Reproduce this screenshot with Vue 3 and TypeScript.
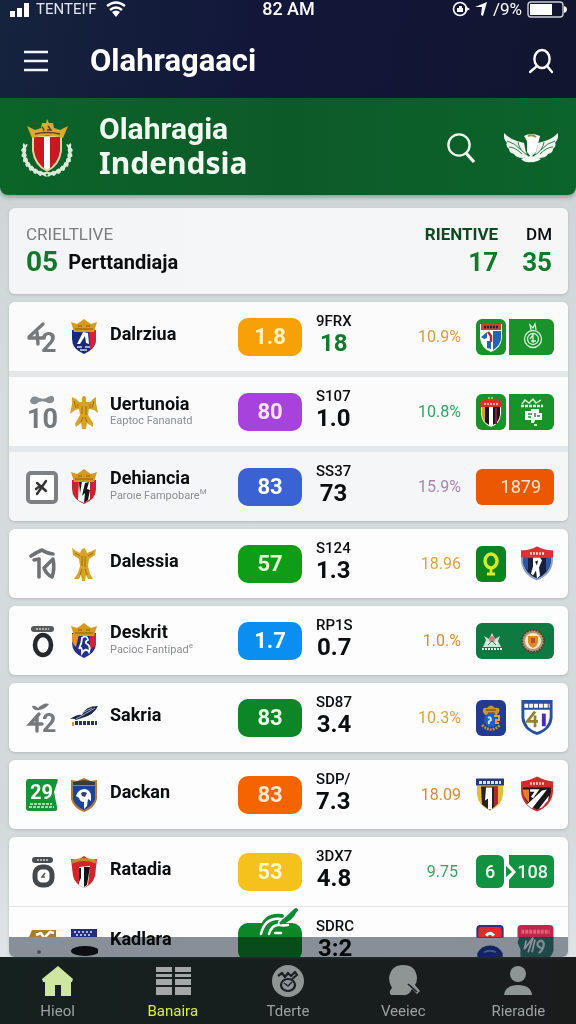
<script setup lang="ts">
interface Digits {
  text: string
  x: number
  y: number
  size: number
  fill: string
}
interface TailItem {
  kind: 'tile' | 'icon' | 'text' | 'wide'
  tone?: string
  icons?: string[]
  text?: string
}
interface Row {
  rank: string
  rankLabel: string
  digits?: Digits
  crest: string
  name: string
  sub?: string
  mark?: string
  score: string
  tone: string
  code: string
  value: string
  valueTone?: string
  pct: string
  pctTone: string
  tail: TailItem[]
}
interface Group {
  id: string
  kind: string
  rows: Row[]
}

const groups: Group[] = [
  {
    id: 'top',
    kind: 'banded',
    rows: [
      {
        rank: 'rank-42', rankLabel: '42', digits: { text: '2', x: 15, y: 33, size: 27, fill: '#77797b' },
        crest: 'crest-navy', name: 'Dalrziua', score: '1.8', tone: 'amber',
        code: '9FRX', value: '18', valueTone: 'green', pct: '10.9%', pctTone: 'p-amber',
        tail: [{ kind: 'tile', tone: 'leaf', icons: ['shield-blue'] }, { kind: 'tile', tone: 'leaf flag', icons: ['medal'] }],
      },
      {
        rank: 'rank-10', rankLabel: '10', digits: { text: '10', x: 1, y: 34, size: 27, fill: '#77797b' },
        crest: 'eagle', name: 'Uertunoia', sub: 'Eaptoc Fananatd', score: '80', tone: 'purple',
        code: 'S107', value: '1.0', pct: '10.8%', pctTone: 'p-green',
        tail: [{ kind: 'tile', tone: 'leaf', icons: ['shield-stripe'] }, { kind: 'tile', tone: 'leaf flag', icons: ['stamp'] }],
      },
      {
        rank: 'rank-x', rankLabel: 'X', crest: 'crest-red', name: 'Dehiancia', sub: 'Paroıe Fampobare', mark: 'M', score: '83', tone: 'blue',
        code: 'SS37', value: '73', pct: '15.9%', pctTone: 'p-mauve',
        tail: [{ kind: 'wide', tone: 'rust', text: '1879' }],
      },
    ],
  },
  {
    id: 'dalessia',
    kind: 'single',
    rows: [
      {
        rank: 'rank-70', rankLabel: '70', crest: 'eagle-slim', name: 'Dalessia', score: '57', tone: 'lime',
        code: 'S124', value: '1.3', pct: '18.96', pctTone: 'p-gold',
        tail: [{ kind: 'tile', tone: 'forest', icons: ['trophy'] }, { kind: 'icon', icons: ['shield-pris'] }],
      },
    ],
  },
  {
    id: 'deskrit',
    kind: 'single',
    rows: [
      {
        rank: 'rank-0', rankLabel: '0', crest: 'crest-royal', name: 'Deskrit', sub: 'Pacioc Fantipad', mark: 'e', score: '1.7', tone: 'sky',
        code: 'RP1S', value: '0.7', pct: '1.0.%', pctTone: 'p-orange',
        tail: [{ kind: 'wide', tone: 'pine', icons: ['lotus', 'roundel'] }],
      },
    ],
  },
  {
    id: 'sakria',
    kind: 'single',
    rows: [
      {
        rank: 'rank-42b', rankLabel: '42', digits: { text: '2', x: 16, y: 32, size: 25, fill: '#77797b' },
        crest: 'quill', name: 'Sakria', score: '83', tone: 'emerald',
        code: 'SD87', value: '3.4', pct: '10.3%', pctTone: 'p-gold',
        tail: [{ kind: 'tile', tone: 'royal', icons: ['lion'] }, { kind: 'icon', icons: ['shield-41'] }],
      },
    ],
  },
  {
    id: 'dackan',
    kind: 'single',
    rows: [
      {
        rank: 'rank-29', rankLabel: '29', digits: { text: '29', x: 4, y: 22, size: 20, fill: '#fff' },
        crest: 'crest-wolf', name: 'Dackan', score: '83', tone: 'orange',
        code: 'SDP/', value: '7.3', pct: '18.09', pctTone: 'p-orange',
        tail: [{ kind: 'icon', icons: ['shield-gold'] }, { kind: 'icon', icons: ['shield-slash'] }],
      },
    ],
  },
  {
    id: 'last',
    kind: 'lined',
    rows: [
      {
        rank: 'rank-0b', rankLabel: '0', crest: 'crest-stripe', name: 'Ratadia', score: '53', tone: 'yellow',
        code: '3DX7', value: '4.8', pct: '9.75', pctTone: 'p-green inset',
        tail: [{ kind: 'text', tone: 'mint small', text: '6' }, { kind: 'text', tone: 'arrow', icons: ['notch'], text: '108' }],
      },
      {
        rank: 'rank-gold', rankLabel: '', crest: 'crest-cut', name: 'Kadlara', score: '', tone: 'emerald swirl',
        code: 'SDRC', value: '3:2', pct: '', pctTone: 'p-green',
        tail: [{ kind: 'icon', icons: ['chip-red'] }, { kind: 'icon', tone: 'chip', icons: ['chip-teal'] }],
      },
    ],
  },
]

const tabs = [
  { icon: 'tab-home', label: 'Hieol', state: 'home' },
  { icon: 'tab-grid', label: 'Banaira', state: 'active' },
  { icon: 'tab-ball', label: 'Tderte', state: '' },
  { icon: 'tab-chat', label: 'Veeiec', state: '' },
  { icon: 'tab-user', label: 'Rieradie', state: '' },
]

const leaves = Array.from({ length: 8 }, (_, i) => {
  const deg = 100 + i * 13
  const rad = (deg * Math.PI) / 180
  const x = 27 + 23 * Math.cos(rad)
  const y = 33 + 22 * Math.sin(rad)
  return { outer: `translate(${x.toFixed(1)} ${y.toFixed(1)}) rotate(${deg + 68})`, inner: `translate(${x.toFixed(1)} ${y.toFixed(1)}) rotate(${deg + 118})` }
})
</script>

<template>
  <div class="page">
    <svg class="defs" aria-hidden="true">
      <symbol id="rank-42" viewBox="0 0 32 36">
        <path d="M3 18 L17 5 M11 13 L12 25 M3 19 H18" fill="none" stroke="#77797b" stroke-width="3.4" stroke-linecap="round" />
      </symbol>
      <symbol id="rank-10" viewBox="0 0 32 36">
        <path d="M4 7 Q6 0 13 4 Q19 6 22 3 Q29 0 28 7 Q25 11 20 8 Q14 6 10 10 Q5 11 4 7Z" fill="#8a8c8e" />
      </symbol>
      <symbol id="rank-x" viewBox="0 0 32 36">
        <rect x="2" y="4" width="28" height="29" rx="3" fill="#fff" stroke="#7e8183" stroke-width="4" />
        <path d="M20 12 L11 25 M11 14 L20 22 M10 20 L14 17" fill="none" stroke="#333" stroke-width="2.4" stroke-linecap="round" />
      </symbol>
      <symbol id="rank-70" viewBox="0 0 32 36">
        <g fill="none" stroke="#6f7274" stroke-width="3.6" stroke-linecap="round" stroke-linejoin="round">
          <path d="M5 10 Q11 6 16 4 Q20 7 27 8 M8 14 L13 13 V31" />
          <path d="M27 13 L18 22 Q20 28 26 31 Q29 23 27 13Z" />
        </g>
      </symbol>
      <symbol id="rank-0" viewBox="0 0 32 36">
        <rect x="5" y="3" width="23" height="6" rx="3" fill="#585b5d" />
        <path d="M10 6 H23" stroke="#c8cacb" stroke-width="1.5" stroke-dasharray="2 1" />
        <ellipse cx="17" cy="22" rx="8" ry="10" fill="none" stroke="#25292b" stroke-width="4.6" />
      </symbol>
      <symbol id="rank-42b" viewBox="0 0 32 36">
        <path d="M6 6 Q9 5 12 8 Q18 2 23 4 Q20 9 13 10 Q7 11 6 6Z" fill="#77797b" />
        <path d="M13 14 L4 24 H16 M11 16 V31" fill="none" stroke="#77797b" stroke-width="3.4" stroke-linecap="round" />
      </symbol>
      <symbol id="rank-29" viewBox="0 0 32 36">
        <path d="M3 2 H30 Q33 2 31 6 L28 15 L31 30 Q32 34 29 34 H3 Q0 34 0 31 V5 Q0 2 3 2Z" fill="#149433" />
        <path d="M4 27 H26 M3 30 H28" stroke="#d5f1da" stroke-width="1.6" stroke-dasharray="3 1" />
      </symbol>
      <symbol id="rank-0b" viewBox="0 0 32 36">
        <rect x="6" y="3" width="21" height="6" rx="3" fill="#4a4d4f" />
        <path d="M11 6 H22" stroke="#d2d4d5" stroke-width="1.5" stroke-dasharray="2 1" />
        <rect x="9" y="13" width="17" height="18" rx="7" fill="none" stroke="#45484a" stroke-width="5" />
        <path d="M19 19 L16 23 H19" fill="none" stroke="#555" stroke-width="1.5" />
      </symbol>
      <symbol id="rank-gold" viewBox="0 0 32 36">
        <path d="M6 6 H30 V13 H3Z" fill="#a97a30" />
        <path d="M10 11 L15 9 L18 14 L24 8 L28 9" fill="none" stroke="#fff" stroke-width="2.5" />
        <circle cx="13" cy="28" r="2" fill="#8b93a0" />
      </symbol>

      <symbol id="crown" viewBox="0 0 28 13">
        <path d="M1 3 L7 5 L10 3 L14 0 L18 3 L21 5 L27 3 L24 13 H4Z" fill="#d79a1c" />
        <path d="M5 10 H23 M8 7 H12 M16 7 H20" stroke="#8b5a0c" stroke-width="1.2" />
      </symbol>
      <symbol id="crest-navy" viewBox="0 0 28 36">
        <path d="M2 11 H26 V20 Q26 30 14 35 Q2 30 2 20Z" fill="#1b2a78" />
        <path d="M19 11 H26 V20 Q26 27 20 31Z" fill="#d0243a" />
        <path d="M13 13 L18 14 L19 25 L16 24 L15 17 L10 25 L7 25Z" fill="#fff" />
        <path d="M7 28 H12 M15 28 H20 M10 31 H17" stroke="#cfd7f0" stroke-width="1.6" />
        <use href="#crown" width="28" height="13" />
      </symbol>
      <symbol id="crest-royal" viewBox="0 0 28 36">
        <path d="M2 10 H26 V20 Q26 30 14 35 Q2 30 2 20Z" fill="#20308c" />
        <path d="M2 11 H9 L6 24 Q2 20 2 18Z" fill="#e8912a" />
        <path d="M20 11 H26 V22 L20 27Z" fill="#d0243a" />
        <path d="M12 15 Q17 11 18 17 Q14 19 17 21 Q21 23 19 29 Q16 24 12 30 Q12 22 9 26 Q12 20 12 15Z" fill="none" stroke="#fff" stroke-width="1.8" />
        <use href="#crown" width="28" height="13" />
      </symbol>
      <symbol id="crest-red" viewBox="0 0 28 36">
        <path d="M2 11 H26 V20 Q26 30 14 35 Q2 30 2 20Z" fill="#d2202c" />
        <path d="M9 12 H20 V30 L14 34 L8 31Z" fill="#fff" />
        <path d="M15 14 L19 13 L17 20 L20 21 L18 31 L14 34 L15 24 L12 27Z" fill="#161616" />
        <path d="M9 13 L12 12 L10 25Z" fill="#161616" />
        <use href="#crown" width="28" height="13" />
      </symbol>
      <symbol id="crest-wolf" viewBox="0 0 28 36">
        <path d="M1 3 L7 4 L14 1 L21 4 L27 3 V22 Q25 31 14 35 Q3 31 1 22Z" fill="#b57a34" />
        <path d="M3 9 H25 V22 Q23 29 14 33 Q5 29 3 22Z" fill="#1a439c" />
        <path d="M3 5 L14 3 L25 5 V8 H3Z" fill="#3c3a3a" />
        <path d="M6 19 Q8 12 15 12 Q20 13 21 18 L21 24 L18 22 L17 29 L14 32 L14 25 Q10 25 9 21Z" fill="#fff" />
        <path d="M11 16 Q14 14 17 16 L15 20 L12 19Z" fill="#2b3f73" />
      </symbol>
      <symbol id="crest-stripe" viewBox="0 0 28 36">
        <path d="M1 5 L8 6 L14 2 L20 6 L27 5 L25 22 Q23 30 14 34 Q5 30 3 22Z" fill="#d3242a" />
        <path d="M2 8 Q14 3 26 8" fill="none" stroke="#c8892c" stroke-width="3" />
        <path d="M9 13 L20 12 L18 31 L14 34 L9 31Z" fill="#fff" />
        <path d="M14 13 H20 L17 31 L14 33Z M9 14 H11 V24 L9 28Z" fill="#141414" />
      </symbol>
      <symbol id="crest-cut" viewBox="0 0 28 36">
        <path d="M1 5 H27 V13 H1Z" fill="#222e84" />
        <path d="M4 8 H24 M6 11 H22" stroke="#dfe4ff" stroke-width="1.4" stroke-dasharray="2 2" />
        <ellipse cx="15" cy="27" rx="14" ry="5" fill="#15181b" />
      </symbol>
      <symbol id="eagle" viewBox="0 0 28 36">
        <path d="M2 3 L6 5 L9 8 L12 8 Q11 4 13 2 Q17 2 16 5 L16 8 L20 8 L23 5 L26 3 L26 9 L28 19 L24 16 L19 15 L18 21 L23 29 L23 33 L17 29 L16 35 H12 L11 29 L6 33 L5 30 L10 21 L9 15 L5 16 L0 20 L2 10Z" fill="#d9a326" />
        <path d="M4 7 L6 14 M24 7 L22 14 M12 12 V20 M16 12 V21 M13 23 L11 28 M15 23 L17 28 M8 10 V14 M20 10 V14" fill="none" stroke="#9a6b12" stroke-width="1" />
      </symbol>
      <symbol id="eagle-slim" viewBox="0 0 28 36">
        <path d="M2 2 L6 5 L10 7 L12 3 L15 2 L17 7 L22 5 L26 3 L25 9 L19 13 L18 20 L20 28 L23 33 L18 33 L16 29 L15 35 L12 35 L11 29 L9 33 L4 33 L8 27 L10 20 L9 13 L3 9Z" fill="#d9a326" />
        <path d="M5 7 L10 10 M23 7 L18 10 M12 10 V20 M15 10 V21 M12 23 L10 29 M15 23 L17 29" fill="none" stroke="#9a6b12" stroke-width="1" />
      </symbol>
      <symbol id="quill" viewBox="0 0 28 36">
        <path d="M0 19 Q8 14 12 15 Q15 6 28 6 Q24 15 12 18 L6 20 Q4 18 0 19Z" fill="#1c2648" />
        <path d="M6 19 Q15 14 25 8 M12 13 L22 8" stroke="#b8c0d8" stroke-width="0.9" fill="none" />
        <path d="M5 23 H27" stroke="#25345f" stroke-width="4" stroke-dasharray="3 1" />
        <path d="M3 22 V26" stroke="#e09027" stroke-width="2" />
      </symbol>

      <symbol id="shield-blue" viewBox="0 0 24 32">
        <path d="M1 3 H23 V17 Q22 27 12 31 Q2 27 1 17Z" fill="#fff" />
        <path d="M2 3 H22 V9 H2Z" fill="#cf4326" />
        <path d="M5 6 H19" stroke="#1b2350" stroke-width="2.4" stroke-dasharray="2 1" />
        <path d="M14 10 H22 V18 Q21 25 14 29Z" fill="#2265b5" />
        <path d="M2 16 L8 11 V17 L5 18Z M8 20 H12 V28 L8 27Z" fill="#2265b5" />
        <path d="M9 11 L12 15 V21" fill="none" stroke="#b6292c" stroke-width="2.4" />
      </symbol>
      <symbol id="shield-stripe" viewBox="0 0 24 32">
        <path d="M2 5 H22 V18 Q21 28 12 31 Q3 28 2 18Z" fill="#fff" />
        <path d="M3 11 H8 V28 Q3 24 3 18Z" fill="#d6a02c" />
        <path d="M6 11 H10 V29 L6 26Z M14 11 H21 V19 Q20 26 14 29Z" fill="#1c1420" />
        <path d="M17 12 V28" stroke="#7d2436" stroke-width="2" />
        <path d="M1 5 L12 3 L23 5 L22 11 H2Z" fill="#d8342c" />
        <path d="M5 8 H19" stroke="#f5d8c8" stroke-width="1.6" stroke-dasharray="2 1" />
        <path d="M9 2 H15" stroke="#e3c558" stroke-width="1.4" stroke-dasharray="2 1" />
      </symbol>
      <symbol id="medal" viewBox="0 0 24 32">
        <g fill="none" stroke="#d7f3da" stroke-width="1.3">
          <circle cx="13" cy="18" r="8.5" />
          <circle cx="13" cy="18" r="5.5" />
          <path d="M11 9 L10 4 L13 7 L15 3 L16 9 M13 13 V22 M11 20 H16 M13 14 L10 18" />
        </g>
      </symbol>
      <symbol id="stamp" viewBox="0 0 24 32">
        <path d="M2 8 L5 4 L9 7 L13 3 L16 7 L21 4" fill="none" stroke="#dcf6df" stroke-width="1.4" />
        <path d="M1 10 H23" stroke="#dcf6df" stroke-width="2.4" stroke-dasharray="3 1" />
        <path d="M5 15 H11 V13 H19 V17 H22 V24 H15 L14 27 H11 V24 H5Z" fill="#fff" />
        <path d="M8 18 H12 M15 17 V21 M8 21 H11 M17 20 H20" stroke="#1d9130" stroke-width="1.5" />
        <path d="M14 29 H17" stroke="#fff" stroke-width="1.6" />
      </symbol>
      <symbol id="trophy" viewBox="0 0 24 32">
        <ellipse cx="12" cy="13" rx="6" ry="7" fill="none" stroke="#d8ec23" stroke-width="3.4" />
        <path d="M12 20 V26 M8 26 H16" stroke="#d8ec23" stroke-width="2.8" />
      </symbol>
      <symbol id="lotus" viewBox="0 0 24 32">
        <path d="M3 22 L6 15 L4 11 L9 14 L12 8 L15 14 L20 11 L18 16 L21 22Z" fill="#cfe6d6" />
        <circle cx="12" cy="14" r="3" fill="#c97f7f" />
        <path d="M7 18 H17 M2 24 H22" stroke="#e9f5ec" stroke-width="1.8" stroke-dasharray="2 1" />
        <path d="M8 20 L12 16 L16 20" stroke="#1c7a45" fill="none" />
      </symbol>
      <symbol id="roundel" viewBox="0 0 24 32">
        <circle cx="12" cy="16" r="11" fill="#a79a78" stroke="#5d3b2d" stroke-width="2" stroke-dasharray="2 1" />
        <circle cx="12" cy="16" r="8" fill="#f4ead0" />
        <path d="M7 11 H17 V16 Q17 21 12 23 Q7 21 7 16Z" fill="#dd8a1f" />
        <path d="M10 13 H14 V18 H10Z" fill="#c5462a" />
      </symbol>
      <symbol id="lion" viewBox="0 0 24 32">
        <path d="M4 10 Q3 5 8 6 Q12 1 16 6 Q22 5 20 10 L18 13 H6Z" fill="#d19330" />
        <path d="M7 8 H17 M9 11 H16" stroke="#5f4418" stroke-width="1.2" />
        <circle cx="12" cy="18" r="7" fill="#1c5fc6" />
        <path d="M9 16 Q12 14 12 18 Q9 19 10 22" fill="none" stroke="#bfe3ff" stroke-width="2" />
        <path d="M15 14 H20 V18 H17 V21 H20" fill="none" stroke="#dba33d" stroke-width="2" />
        <path d="M3 23 Q12 32 21 23" fill="none" stroke="#c98f3a" stroke-width="2.6" stroke-dasharray="2 1" />
      </symbol>
      <symbol id="shield-pris" viewBox="0 0 34 36">
        <path d="M1 5 Q10 5 17 1 Q24 5 33 5 V15 Q32 29 17 35 Q2 29 1 15Z" fill="#8aa1c9" />
        <path d="M3 12 H31 V16 Q29 28 17 33 Q5 28 3 16Z" fill="#18203f" />
        <path d="M26 12 H31 V16 Q30 22 26 27Z" fill="#2d55a5" />
        <path d="M3 12 H8 V25 Q3 21 3 16Z" fill="#2d55a5" />
        <path d="M13 12 H20 L22 15 L19 22 L20 30 L17 33 L16 25 L13 30 L11 28 L13 21Z" fill="#fff" />
        <path d="M15 16 L18 15 L17 20Z" fill="#18203f" />
        <path d="M1 5 Q10 5 17 1 Q24 5 33 5 V12 H1Z" fill="#df2f2e" />
        <path d="M10 8 H24" stroke="#ffdcd6" stroke-width="2.6" stroke-dasharray="2 1" />
      </symbol>
      <symbol id="shield-41" viewBox="0 0 34 38">
        <path d="M1 1 H33 V19 Q32 32 17 37 Q2 32 1 19Z" fill="#2750a2" />
        <path d="M4 11 H30 V19 Q29 30 17 34 Q5 30 4 19Z" fill="#fff" />
        <path d="M4 7 H30" stroke="#fff" stroke-width="4" stroke-dasharray="4 1" />
        <path d="M15 13 L7 23 H18 M15 17 V29" fill="none" stroke="#93822e" stroke-width="2.8" />
        <path d="M24 15 V28" stroke="#4a2bb3" stroke-width="4" />
      </symbol>
      <symbol id="shield-gold" viewBox="0 0 28 36">
        <path d="M1 9 H27 V18 Q26 29 14 34 Q2 29 1 18Z" fill="#e3bb3e" />
        <path d="M5 10 H22 V27 L14 34 L6 28Z" fill="#2b2021" />
        <path d="M18 10 H22 V27 L18 30Z" fill="#b02b27" />
        <path d="M10 11 H16 V33 H12 V22 L9 24Z" fill="#fff" />
        <path d="M0 2 H28 V9 H0Z" fill="#253a7c" />
        <path d="M3 6 H25" stroke="#dbe3f5" stroke-width="3" stroke-dasharray="3 1" />
      </symbol>
      <symbol id="shield-slash" viewBox="0 0 34 36">
        <path d="M1 5 Q10 4 17 0 Q24 4 33 5 V15 Q32 29 17 35 Q2 29 1 15Z" fill="#d02c2b" />
        <path d="M3 11 H31 V15 Q29 28 17 33 Q5 28 3 15Z" fill="#191719" />
        <path d="M3 13 H9 V26 Q3 20 3 15Z" fill="#e08325" />
        <path d="M7 28 L22 14 L27 13 L12 32Z M19 32 L29 19 L28 24 L22 31Z" fill="#fff" />
        <path d="M10 14 H17 L12 21" fill="none" stroke="#fff" stroke-width="2.6" />
        <path d="M10 7 H24" stroke="#ffc9bd" stroke-width="2.6" stroke-dasharray="2 1" />
      </symbol>
      <symbol id="notch" viewBox="0 0 48 33">
        <path d="M3 0 H42 Q48 0 48 6 V27 Q48 33 42 33 H3 V25 L10 17 L3 9Z" fill="#129140" />
        <path d="M0 11 L6 17 L0 22Z" fill="#129140" />
      </symbol>
      <symbol id="chip-red" viewBox="0 0 28 38">
        <path d="M4 2 H24 Q28 2 28 6 V15 H0 V6 Q0 2 4 2Z" fill="#3b2a8c" />
        <path d="M5 4 H23 Q26 4 26 8 V15 H2 V8 Q2 4 5 4Z" fill="#e22b2c" />
        <path d="M10 13 Q14 8 18 13" fill="none" stroke="#fff" stroke-width="3" />
        <path d="M1 38 V31 Q5 23 14 23 Q23 23 27 31 V38Z" fill="#24409c" />
        <path d="M8 30 Q14 27 20 30" fill="none" stroke="#7e9be0" stroke-width="2" />
      </symbol>
      <symbol id="chip-teal" viewBox="0 0 38 38">
        <path d="M3 14 H38 V28 Q36 36 30 36 H4 V27 L1 20Z" fill="#3a8378" />
        <path d="M5 2 H34 Q38 2 38 6 V15 H1 V6 Q1 2 5 2Z" fill="#c02649" />
        <path d="M5 9 H34" stroke="#e2607c" stroke-width="4" stroke-dasharray="3 1" />
        <path d="M10 18 L8 27 L17 15 L12 30 M19 17 L16 30" fill="none" stroke="#fff" stroke-width="1.8" />
        <path d="M27 26 Q20 25 22 20 Q26 16 28 21 Q28 27 23 31" fill="none" stroke="#e4f2f0" stroke-width="2.4" />
      </symbol>
      <symbol id="swirl" viewBox="0 0 64 40">
        <g fill="none" stroke-linecap="round">
          <path d="M24 22 Q27 7 44 9 M28 26 Q29 13 44 14 M46 14 L58 3" stroke="#128a35" stroke-width="4" />
          <path d="M23 27 Q27 10 43 12 Q37 20 50 18 M31 27 Q34 17 42 18 M37 26 H43" stroke="#fff" stroke-width="2.6" />
          <path d="M43 16 Q53 14 58 3" stroke="#128a35" stroke-width="3" />
        </g>
      </symbol>

      <symbol id="tab-home" viewBox="0 0 36 32">
        <path d="M18 1 L33 14 L32 17 H31 V31 H21 V20 H15 V31 H5 V17 H3 L2 14Z" fill="#cfe6a2" />
      </symbol>
      <symbol id="tab-grid" viewBox="0 0 36 32">
        <path d="M1 2 H17 V7 H1Z M20 2 H36 V7 H20Z M1 9 H17 V12 H1Z M20 9 H36 V12 H20Z M1 14 H17 V20 H1Z M20 14 H36 V20 H20Z M1 22 H17 V30 H1Z M20 22 H36 V30 H20Z" fill="#a3a7a8" />
      </symbol>
      <symbol id="tab-ball" viewBox="0 0 36 34">
        <circle cx="18" cy="17" r="16" fill="#8f9495" />
        <g fill="none" stroke="#191f20" stroke-width="2.2" stroke-linejoin="round">
          <path d="M8 12 L12 9 L15 13 L18 9 L21 12 L25 8 L27 11 L22 15" />
          <ellipse cx="18" cy="21" rx="7" ry="6" />
          <path d="M14 19 L18 22 L22 18" stroke-width="1.4" />
        </g>
      </symbol>
      <symbol id="tab-chat" viewBox="0 0 36 34">
        <path d="M18 1 Q31 1 32 14 Q32 18 30 21 L35 27 L32 30 L29 27 L27 25 Q24 32 18 31 H6 Q3 28 7 24 Q4 19 4 14 Q6 1 18 1Z" fill="#8f9495" />
        <path d="M23 20 L32 28" stroke="#191f20" stroke-width="1.6" />
      </symbol>
      <symbol id="tab-user" viewBox="0 0 36 32">
        <circle cx="18" cy="9" r="8" fill="#8f9495" />
        <path d="M4 30 Q5 20 18 20 Q31 20 32 30Z" fill="#8f9495" />
      </symbol>
    </svg>

    <header class="top">
      <div class="status">
        <div class="status-side">
          <svg width="21" height="16" viewBox="0 0 21 16" aria-hidden="true"><path d="M0 10 H5 V16 H0Z M7 7 H12 V16 H7Z M14 2 H19 V16 H14Z" fill="#fff" /></svg>
          <span class="carrier">TENTEI'F</span>
          <svg class="wifi" width="20" height="16" viewBox="0 0 20 16" aria-hidden="true">
            <path d="M1 5 Q10 -2 19 5 M4 9 Q10 4 16 9" fill="none" stroke="#fff" stroke-width="2.4" />
            <path d="M6 11 Q10 8 14 11 L10 16Z" fill="#fff" />
          </svg>
        </div>
        <span class="clock">82 AM</span>
        <div class="status-side end">
          <svg width="18" height="16" viewBox="0 0 18 16" aria-hidden="true">
            <circle cx="8" cy="8" r="6.5" fill="none" stroke="#fff" stroke-width="1.6" />
            <path d="M5 7 H7 V5 H10 V7 H11 V11 H5Z M13 5 L18 8 L13 11Z" fill="#fff" />
          </svg>
          <svg width="13" height="14" viewBox="0 0 13 14" aria-hidden="true"><path d="M0 5 L12 0 L8 14 L6 13 L7 5Z" fill="#fff" /></svg>
          <span class="battery-text">/9%</span>
          <svg width="40" height="17" viewBox="0 0 40 17" aria-hidden="true">
            <rect x="1" y="1" width="35" height="15" rx="3" fill="none" stroke="#c9cdd8" stroke-width="1.4" />
            <path d="M3 3 H25 V14 H3Z" fill="#fff" />
            <path d="M37 5 Q40 6 40 8 Q40 11 37 12Z" fill="#fff" />
          </svg>
        </div>
      </div>
      <div class="appbar">
        <button type="button" class="bare" aria-label="Menu">
          <svg width="24" height="22" viewBox="0 0 24 22"><path d="M0 2 H24 M0 11 H24 M0 20 H24" stroke="#f4f5f9" stroke-width="2.6" /></svg>
        </button>
        <h1>Olahragaaci</h1>
        <button type="button" class="bare" aria-label="Profile">
          <svg width="24" height="26" viewBox="0 0 24 26">
            <g fill="none" stroke="#fff" stroke-width="2.4" stroke-linecap="round">
              <ellipse cx="13" cy="11" rx="7.6" ry="9" />
              <path d="M1 24 L8 18 M18 18 L23 24" />
            </g>
          </svg>
        </button>
      </div>
    </header>

    <section class="banner">
      <svg class="emblem" width="54" height="58" viewBox="0 0 54 58" aria-hidden="true">
        <g fill="#dcebd9">
          <g v-for="side in [1, -1]" :key="side" :transform="side === 1 ? undefined : 'translate(54 0) scale(-1 1)'">
            <g v-for="(leaf, i) in leaves" :key="i">
              <ellipse :transform="leaf.outer" rx="4.6" ry="1.3" />
              <ellipse :transform="leaf.inner" rx="4.6" ry="1.2" />
            </g>
          </g>
        </g>
        <path d="M12 17 H42 V32 Q40 47 27 53 Q14 47 12 32Z" fill="#e5d3a0" />
        <path d="M14 18 H40 V32 Q38 45 27 51 Q16 45 14 32Z" fill="#c8191f" />
        <path d="M24 18 H30 V49 L27 51 L24 49Z" fill="#fff" />
        <path d="M7 7 L15 11 L21 9 L22 4 L26 4 L27 0 L29 4 L33 4 L34 9 L40 11 L48 7 L43 19 Q27 14 12 19Z" fill="#dda928" />
        <path d="M22 8 Q25 11 23 12 M28 7 L31 11 H27 M15 15 Q27 12 40 15" fill="none" stroke="#5c4310" stroke-width="1.4" />
      </svg>
      <h2>
        <span class="line-one">Olahragia</span>
        <span class="line-two">Indendsia</span>
      </h2>
      <button type="button" class="bare" aria-label="Search">
        <svg width="29" height="30" viewBox="0 0 29 30">
          <circle cx="12" cy="12" r="10.6" fill="none" stroke="#eaf7ec" stroke-width="2.4" />
          <path d="M19 20 L27 29" stroke="#eaf7ec" stroke-width="3.2" />
        </svg>
      </button>
      <svg class="wings" width="54" height="30" viewBox="0 0 54 30" aria-hidden="true">
        <g v-for="side in [1, -1]" :key="side" :transform="side === 1 ? undefined : 'translate(54 0) scale(-1 1)'">
          <path d="M0 0 Q6 6 13 8 L20 10 Q21 18 24 24 L19 25 Q12 25 10 21 Q5 20 5 16 Q1 12 3 10 Q-1 6 0 0Z" fill="#eef5ee" />
          <path d="M3 8 Q11 10 17 17 M5 14 Q11 14 18 21 M14 9 Q15 17 23 22" fill="none" stroke="#1e6b38" stroke-width="0.9" />
        </g>
        <path d="M20 3 Q27 -1 36 3 L32 19 L27 24 L23 19 L23 8Z" fill="#fff" />
        <path d="M24 3 Q28 1 32 4" fill="none" stroke="#a88a45" stroke-width="2" />
        <path d="M17 26 Q27 20 37 26 Q32 30 27 29 Q21 30 17 26Z" fill="#f4faf3" />
      </svg>
    </section>

    <main class="content">
      <section class="card summary">
        <div class="lead">
          <span class="caption">CRIELTLIVE</span>
          <div class="lead-row"><span class="figure">05</span><span class="lead-name">Perttandiaja</span></div>
        </div>
        <div class="total green-cap"><span class="cap">RIENTIVE</span><span class="figure small">17</span></div>
        <div class="total"><span class="cap">DM</span><span class="figure small">35</span></div>
      </section>

      <ul v-for="group in groups" :key="group.id" class="card list" :class="group.kind">
        <li v-for="row in group.rows" :key="row.name" class="row">
          <svg class="rank" width="32" height="36" viewBox="0 0 32 36" role="img" :aria-label="row.rankLabel">
            <use :href="'#' + row.rank" width="32" height="36" />
            <text v-if="row.digits" :x="row.digits.x" :y="row.digits.y" :font-size="row.digits.size" :fill="row.digits.fill">{{ row.digits.text }}</text>
          </svg>
          <svg class="crest" width="28" height="36" aria-hidden="true"><use :href="'#' + row.crest" /></svg>
          <div class="who" :class="{ solo: !row.sub }">
            <span class="name">{{ row.name }}</span>
            <span v-if="row.sub" class="sub">{{ row.sub }}<sup v-if="row.mark">{{ row.mark }}</sup></span>
          </div>
          <div class="score" :class="row.tone">
            {{ row.score }}
            <svg v-if="!row.score" class="swirl-art" width="64" height="40" aria-hidden="true"><use href="#swirl" /></svg>
          </div>
          <div class="stat">
            <div class="stat-box">
              <span class="code">{{ row.code }}</span>
              <span class="value" :class="row.valueTone">{{ row.value }}</span>
            </div>
          </div>
          <span class="pct" :class="row.pctTone">{{ row.pct }}</span>
          <div class="tail">
            <div v-for="(item, i) in row.tail" :key="i" class="item" :class="[item.kind, item.tone]">
              <svg v-for="icon in item.icons" :key="icon" class="glyph" aria-hidden="true"><use :href="'#' + icon" /></svg>
              <span v-if="item.text">{{ item.text }}</span>
            </div>
          </div>
        </li>
      </ul>
    </main>

    <nav class="tabs">
      <a v-for="tab in tabs" :key="tab.icon" href="#" :class="tab.state">
        <svg width="36" height="34" aria-hidden="true"><use :href="'#' + tab.icon" /></svg>
        <span>{{ tab.label }}</span>
      </a>
    </nav>
  </div>
</template>

<style>
body {
  margin: 0;
  background: #d3dadc;
}
</style>

<style scoped>
.page {
  min-height: 100vh;
  display: flex;
  flex-direction: column;
  background: linear-gradient(#c9cfd1, #d6dcde 40%, #d3d9db 80%, #e6e9eb);
  font-family: Roboto, "Liberation Sans", sans-serif;
  color: #0c0d0e;
}
.defs {
  position: absolute;
  width: 0;
  height: 0;
}
.bare {
  display: flex;
  padding: 0;
  border: 0;
  background: none;
}
.top {
  background: linear-gradient(100deg, #15233d, #12173a 45%, #11152f);
  color: #fff;
}
.status {
  display: grid;
  grid-template-columns: 1fr auto 1fr;
  align-items: center;
  height: 18px;
  padding: 0 9px 0 10px;
}
.status-side {
  display: flex;
  align-items: center;
  gap: 5px;
}
.status-side.end {
  justify-content: flex-end;
}
.carrier {
  font-size: 15px;
  line-height: 18px;
  color: #e3e6ee;
}
.wifi {
  margin-left: 5px;
}
.clock,
.battery-text {
  font-size: 17px;
  line-height: 18px;
}
.clock {
  font-size: 18px;
  font-weight: 500;
}
.appbar {
  display: flex;
  align-items: center;
  height: 74px;
  padding: 6px 23px 0 24px;
}
.appbar h1 {
  flex: 1;
  margin: 0 0 0 42px;
  font-size: 31px;
  line-height: 40px;
  font-weight: 700;
}
.banner {
  display: flex;
  align-items: center;
  height: 94px;
  padding: 3px 18px 0 20px;
  border-radius: 0 0 8px 8px;
  background: linear-gradient(90deg, #0b6428, #0d5a29 50%, #0b642a);
  box-shadow: 0 2px 4px rgba(60, 70, 70, 0.45);
  color: #f2fbf2;
}
.banner h2 {
  flex: 1;
  display: flex;
  flex-direction: column;
  margin: 0 0 4px 25px;
  font-weight: 700;
  font-size: 30px;
  line-height: 34px;
}
.line-two {
  font-family: "Noto Sans", sans-serif;
}
.wings {
  margin-left: 28px;
}
.content {
  flex: 1;
  display: flex;
  flex-direction: column;
  gap: 8px;
  padding: 13px 8px 0 9px;
}
.card {
  margin: 0;
  border-radius: 6px;
  background: #fdfdfe;
  box-shadow: 0 1px 3px rgba(90, 105, 110, 0.28);
}
.summary {
  display: flex;
  align-items: center;
  gap: 24px;
  height: 80px;
  padding: 0 16px 6px 17px;
  background: linear-gradient(90deg, #f3f5f6, #f6f6f7);
}
.lead {
  flex: 1;
}
.caption,
.cap {
  display: block;
  font-size: 17px;
  line-height: 28px;
}
.caption {
  color: #7b7d7f;
}
.cap {
  font-weight: 500;
}
.green-cap .cap {
  font-weight: 700;
  color: #0d4a20;
}
.lead-row {
  display: flex;
  align-items: center;
  gap: 10px;
}
.lead-name {
  font-size: 20px;
  line-height: 28px;
  font-weight: 700;
}
.figure {
  font-size: 28px;
  line-height: 28px;
  font-weight: 700;
  color: #0f7b28;
}
.figure.small {
  font-size: 26px;
}
.total {
  display: flex;
  flex-direction: column;
  align-items: flex-end;
}
.list {
  display: flex;
  flex-direction: column;
  padding: 0;
  list-style: none;
}
.banded {
  gap: 6px;
  background: #e5e8ea;
}
.banded .row {
  background: #fbfbfc;
}
.banded .row:first-child {
  border-radius: 6px 6px 0 0;
}
.banded .row:last-child {
  border-radius: 0 0 6px 6px;
  background: #f5f6f8;
}
.row {
  display: grid;
  grid-template-columns: 32px 28px 1fr 64px 78px 60px 78px;
  grid-template-rows: 69px;
  column-gap: 12px;
  align-items: center;
  padding: 0 14px 0 17px;
}
.rank {
  overflow: visible;
  font-weight: 700;
}
.lined {
  position: relative;
  overflow: hidden;
}
.lined .row:last-child {
  height: 50px;
  border-top: 1px solid #e2e4e5;
}
.lined::after {
  content: "";
  position: absolute;
  left: 0;
  right: 0;
  bottom: 0;
  height: 20px;
  background: #89909a;
  mix-blend-mode: multiply;
}
.who {
  display: flex;
  flex-direction: column;
  padding-bottom: 2px;
  white-space: nowrap;
}
.who.solo {
  padding-bottom: 6px;
}
.name {
  font-size: 18px;
  line-height: 20px;
  font-weight: 700;
}
.sub {
  font-size: 11px;
  line-height: 14px;
  color: #8b8d90;
}
.sub sup {
  font-size: 8px;
  line-height: 8px;
}
.score {
  display: flex;
  align-items: center;
  justify-content: center;
  height: 38px;
  border-radius: 10px;
  font-size: 22px;
  font-weight: 700;
  color: #fff;
}
.swirl {
  position: relative;
}
.swirl-art {
  position: absolute;
  left: 0;
  bottom: 14px;
}
.amber { background: #f7a008; color: #fff3c4; }
.purple { background: #a743dc; color: #f8e3ff; }
.blue { background: #3a62d2; }
.lime { background: #0f9d17; color: #e9fbd8; }
.sky { background: #0a8ff0; }
.emerald { background: #0d8628; color: #e9fbe6; }
.orange { background: #f56400; color: #ffe9d2; }
.yellow { background: #f4c11d; color: #fff7cf; }
.stat {
  padding: 0 0 9px 2px;
}
.stat-box {
  display: inline-flex;
  flex-direction: column;
  align-items: center;
}
.code {
  font-size: 15px;
  line-height: 22px;
  font-weight: 500;
}
.value {
  font-size: 24px;
  line-height: 22px;
  font-weight: 700;
}
.value.green {
  color: #13792b;
}
.pct {
  padding-right: 3px;
  text-align: right;
  font-size: 16px;
}
.pct.inset {
  padding-right: 6px;
}
.p-amber { color: #e29a3b; }
.p-gold { color: #e0a438; }
.p-orange { color: #dc8a2c; }
.p-green { color: #33a561; }
.p-mauve { color: #a784b4; }
.tail {
  display: flex;
  align-items: center;
  justify-content: space-between;
}
.item {
  display: flex;
  align-items: center;
  justify-content: center;
  height: 36px;
  border-radius: 6px;
  color: #f3fbf0;
}
.tile {
  width: 30px;
}
.tile .glyph,
.wide .glyph {
  width: 24px;
  height: 32px;
}
.icon .glyph {
  width: 34px;
  height: 37px;
}
.icon:first-child .glyph {
  width: 28px;
}
.icon.chip .glyph {
  width: 38px;
}
.leaf { background: #199229; }
.forest { background: #0b8420; }
.pine { background: #0e7a42; }
.royal { background: #213a92; }
.rust { background: #ec5802; }
.mint { background: #129140; }
.tile.flag {
  width: 45px;
  border-radius: 0 6px 6px 0;
}
.wide {
  flex: 1;
  justify-content: space-between;
  padding: 0 9px 0 4px;
}
.wide.rust {
  justify-content: flex-end;
  padding-right: 13px;
}
.wide span {
  font-size: 18px;
  color: #ffe8d6;
}
.text {
  height: 33px;
  font-size: 18px;
  font-weight: 500;
}
.text.small {
  width: 28px;
}
.text.arrow {
  display: grid;
  grid-template-columns: 48px;
  grid-template-rows: 33px;
  align-items: center;
}
.arrow .glyph,
.arrow span {
  grid-area: 1 / 1;
}
.arrow .glyph {
  width: 48px;
  height: 33px;
}
.arrow span {
  padding-right: 6px;
  text-align: right;
}
.tabs {
  display: grid;
  grid-template-columns: repeat(5, 1fr);
  height: 67px;
  background: linear-gradient(90deg, #15211f, #1a1c1c);
}
.tabs a {
  display: flex;
  flex-direction: column;
  align-items: center;
  padding-top: 7px;
  font-size: 15px;
  line-height: 26px;
  color: #9da1a2;
  text-decoration: none;
}
.tabs a.active {
  color: #dcf02f;
}
</style>
